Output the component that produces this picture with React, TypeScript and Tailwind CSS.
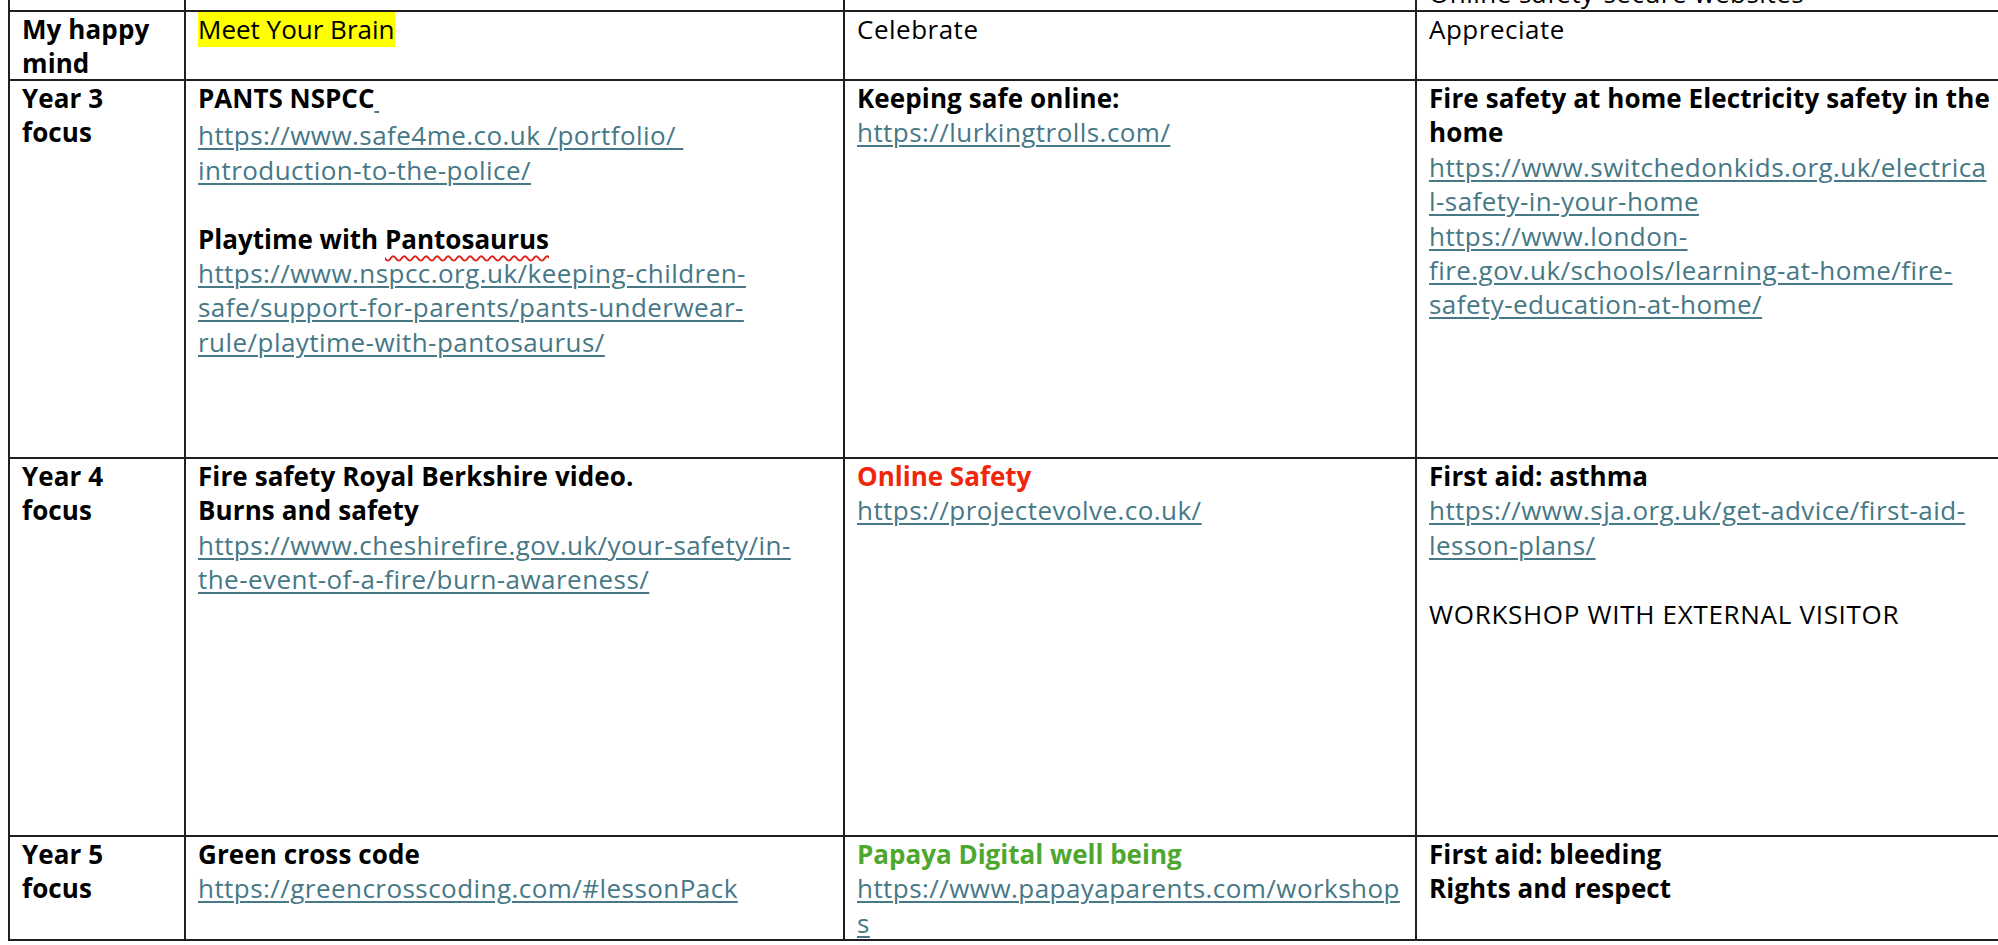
import React from "react";

type Props = { children?: React.ReactNode };

function Line({ children, className = "" }: Props & { className?: string }) {
  return <div className={`whitespace-nowrap ${className}`}>{children ?? "\u00a0"}</div>;
}

// plain text reads a touch wider in the original, so it gets a little tracking
function T({ children }: Props) {
  return <Line className="tracking-[0.5px]">{children}</Line>;
}

function B({ children }: Props) {
  return <Line><span className="font-bold tracking-[0.1px]">{children}</span></Line>;
}

function L({ children }: Props) {
  return (
    <Line className="tracking-[0.45px]">
      <span className="text-[#467886] underline decoration-2 underline-offset-[3px]">{children}</span>
    </Line>
  );
}

function Cell({ children, className = "" }: Props & { className?: string }) {
  return (
    <div className={`border-r-2 border-b-2 border-[#1f1f1f] px-3 overflow-hidden ${className}`}>
      {children}
    </div>
  );
}

export default function App() {
  return (
    <div className="w-[1998px] h-[945px] overflow-hidden bg-white text-black font-['Open_Sans',sans-serif] text-[26px] leading-[34.4px]">
      <div className="ml-2 w-[2100px] grid grid-cols-[176px_659px_572px_690px] grid-rows-[12px_69px_378px_378px_104px] border-l-2 border-[#1f1f1f]">
        {/* row cut off at the top */}
        <Cell />
        <Cell />
        <Cell />
        <Cell>
          <div className="-mt-[24px]">
            <T>Online safety-secure websites</T>
          </div>
        </Cell>

        {/* My happy mind */}
        <Cell>
          <B>My happy</B>
          <B>mind</B>
        </Cell>
        <Cell>
          <Line><span className="bg-[#ffff00]">Meet Your Brain</span></Line>
        </Cell>
        <Cell>
          <T>Celebrate</T>
        </Cell>
        <Cell>
          <T>Appreciate</T>
        </Cell>

        {/* Year 3 */}
        <Cell>
          <B>Year 3</B>
          <B>focus</B>
        </Cell>
        <Cell>
          <Line>
            <span className="font-bold">PANTS NSPCC</span>
            <span className="text-[#467886] underline decoration-2 underline-offset-[3px] text-[18px]">{"\u00a0"}</span>
          </Line>
          <L>https://www.safe4me.co.uk /portfolio/{"\u00a0"}</L>
          <L>introduction-to-the-police/</L>
          <Line />
          <Line>
            <span className="font-bold">
              Playtime with{" "}
              <span className="underline decoration-wavy decoration-[#e0201b] decoration-2 underline-offset-[6px]">
                Pantosaurus
              </span>
            </span>
          </Line>
          <L>https://www.nspcc.org.uk/keeping-children-</L>
          <L>safe/support-for-parents/pants-underwear-</L>
          <L>rule/playtime-with-pantosaurus/</L>
        </Cell>
        <Cell>
          <B>Keeping safe online:</B>
          <L>https://lurkingtrolls.com/</L>
        </Cell>
        <Cell>
          <B>Fire safety at home Electricity safety in the</B>
          <B>home</B>
          <L>https://www.switchedonkids.org.uk/electrica</L>
          <L>l-safety-in-your-home</L>
          <L>https://www.london-</L>
          <L>fire.gov.uk/schools/learning-at-home/fire-</L>
          <L>safety-education-at-home/</L>
        </Cell>

        {/* Year 4 */}
        <Cell>
          <B>Year 4</B>
          <B>focus</B>
        </Cell>
        <Cell>
          <B>Fire safety Royal Berkshire video.</B>
          <B>Burns and safety</B>
          <L>https://www.cheshirefire.gov.uk/your-safety/in-</L>
          <L>the-event-of-a-fire/burn-awareness/</L>
        </Cell>
        <Cell>
          <Line><span className="font-bold text-[#f0260c]">Online Safety</span></Line>
          <L>https://projectevolve.co.uk/</L>
        </Cell>
        <Cell>
          <B>First aid: asthma</B>
          <L>https://www.sja.org.uk/get-advice/first-aid-</L>
          <L>lesson-plans/</L>
          <Line />
          <Line className="tracking-[0.7px]">WORKSHOP WITH EXTERNAL VISITOR</Line>
        </Cell>

        {/* Year 5 */}
        <Cell>
          <B>Year 5</B>
          <B>focus</B>
        </Cell>
        <Cell>
          <B>Green cross code</B>
          <L>https://greencrosscoding.com/#lessonPack</L>
        </Cell>
        <Cell>
          <Line><span className="font-bold text-[#4ea72e]">Papaya Digital well being</span></Line>
          <L>https://www.papayaparents.com/workshop</L>
          <L>s</L>
        </Cell>
        <Cell>
          <B>First aid: bleeding</B>
          <B>Rights and respect</B>
        </Cell>
      </div>
    </div>
  );
}
